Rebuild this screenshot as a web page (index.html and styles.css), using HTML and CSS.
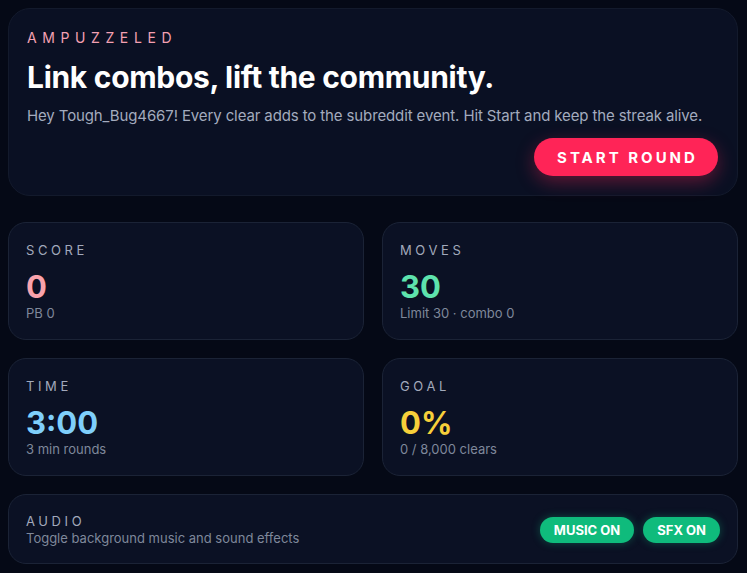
FILE: index.html
```html
<!DOCTYPE html>
<html lang="en">
<head>
<meta charset="utf-8">
<link rel="stylesheet" href="styles.css">
</head>
<body>
<main class="page">
  <section class="card hero">
    <div class="eyebrow">AMPUZZELED</div>
    <h1 class="title">Link combos, lift the community.</h1>
    <p class="intro">Hey Tough_Bug4667! Every clear adds to the subreddit event. Hit Start and keep the streak alive.</p>
    <div class="hero-actions">
      <button class="start-btn">START ROUND</button>
    </div>
  </section>

  <section class="stats">
    <div class="card stat">
      <div class="label">SCORE</div>
      <div class="value pink">0</div>
      <div class="sub">PB 0</div>
    </div>
    <div class="card stat">
      <div class="label">MOVES</div>
      <div class="value green">30</div>
      <div class="sub">Limit 30 · combo 0</div>
    </div>
    <div class="card stat">
      <div class="label">TIME</div>
      <div class="value blue">3:00</div>
      <div class="sub">3 min rounds</div>
    </div>
    <div class="card stat">
      <div class="label">GOAL</div>
      <div class="value yellow">0%</div>
      <div class="sub">0 / 8,000 clears</div>
    </div>
  </section>

  <section class="card audio">
    <div class="audio-text">
      <div class="label">AUDIO</div>
      <div class="audio-sub">Toggle background music and sound effects</div>
    </div>
    <div class="toggles">
      <button class="toggle">MUSIC ON</button>
      <button class="toggle">SFX ON</button>
    </div>
  </section>
</main>
</body>
</html>
```

FILE: styles.css
```css
* { box-sizing: border-box; }
html, body {
  margin: 0;
  background: #050916;
}
body {
  font-family: Inter, "Noto Sans", sans-serif;
  color: #e6e9f2;
}
.page {
  width: 730px;
  margin-left: 8px;
  padding-top: 8px;
  display: flex;
  flex-direction: column;
}
.card {
  background: #0b1124;
  border: 1px solid #1b2336;
  border-radius: 18px;
}
.hero {
  height: 188px;
  padding: 19px 18px 0 18px;
  border-radius: 22px;
  background: #0a1023;
  border-color: #131a2c;
}
.eyebrow {
  font-size: 14px;
  letter-spacing: 5.6px;
  color: #f3a0b2;
  line-height: 18px;
  padding-top: 1px;
}
.title {
  margin: 12px 0 0 0;
  font-size: 30px;
  font-weight: 700;
  letter-spacing: -0.3px;
  line-height: 36px;
  color: #ffffff;
}
.intro {
  margin: 11px 0 0 0;
  font-size: 15px;
  letter-spacing: -0.12px;
  line-height: 20px;
  color: #a3abbe;
}
.hero-actions {
  display: flex;
  justify-content: flex-end;
  margin-top: 12px;
}
.start-btn {
  font-family: inherit;
  border: none;
  background: #ff2457;
  color: #ffffff;
  font-size: 15px;
  font-weight: 700;
  letter-spacing: 3px;
  height: 38px;
  width: 184px;
  border-radius: 19px;
  padding: 0 0 0 3px;
  margin-right: 1px;
  box-shadow: 0 6px 18px rgba(255, 36, 87, 0.35);
}
.stats {
  margin-top: 26px;
  display: grid;
  grid-template-columns: 1fr 1fr;
  gap: 18px;
}
.stat {
  height: 118px;
  padding: 19px 18px 0 17px;
}
.label {
  font-size: 13px;
  letter-spacing: 3.6px;
  color: #a2a9bb;
  line-height: 16px;
}
.value {
  font-size: 31px;
  font-weight: 700;
  line-height: 36px;
  margin-top: 11px;
}
.pink { color: #f9a3ac; }
.green { color: #5ee3ad; }
.blue { color: #7fcffb; }
.yellow { color: #f7cf3a; }
.sub {
  font-size: 13px;
  color: #7f889b;
  line-height: 16px;
}
.audio {
  margin-top: 18px;
  height: 70px;
  padding: 2px 17px 0 17px;
  display: flex;
  align-items: center;
  justify-content: space-between;
}
.audio-text .label { line-height: 17px; }
.audio-sub {
  font-size: 13px;
  color: #7f889b;
  line-height: 17px;
}
.toggles {
  display: flex;
  gap: 9px;
}
.toggle {
  font-family: inherit;
  border: none;
  background: #0fbb7c;
  color: #ffffff;
  font-size: 13px;
  font-weight: 700;
  height: 26px;
  border-radius: 13px;
  padding: 0 14px;
  box-shadow: 0 0 8px rgba(16, 190, 125, 0.35);
}
```
